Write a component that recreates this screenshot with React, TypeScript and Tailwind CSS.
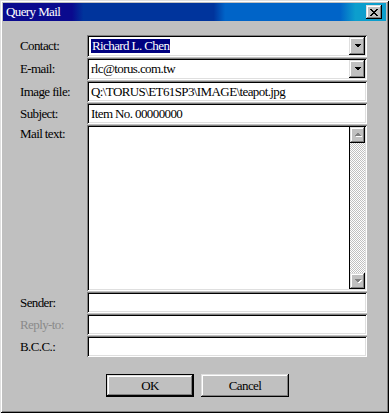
import React from 'react'

const font = { fontFamily: '"Liberation Serif", "Times New Roman", serif' }

const sunken =
  'bg-white shadow-[inset_1px_1px_0_#808080,inset_-1px_-1px_0_#ffffff,inset_2px_2px_0_#000000,inset_-2px_-2px_0_#dfdfdf]'
const raised =
  'bg-[#c0c0c0] shadow-[inset_-1px_-1px_0_#000000,inset_1px_1px_0_#dfdfdf,inset_-2px_-2px_0_#808080,inset_2px_2px_0_#ffffff]'

function DownArrow({ disabled }: { disabled?: boolean }) {
  return (
    <svg width="9" height="6" viewBox="0 0 9 6" shapeRendering="crispEdges">
      {disabled && <path d="M2 2h7L5.5 5.5z" fill="#ffffff" />}
      <path d="M1 1h7L4.5 4.5z" fill={disabled ? '#808080' : '#000000'} />
    </svg>
  )
}

function UpArrow({ disabled }: { disabled?: boolean }) {
  return (
    <svg width="9" height="6" viewBox="0 0 9 6" shapeRendering="crispEdges">
      {disabled && <path d="M2 5h7L5.5 1.5z" fill="#ffffff" />}
      <path d="M1 4h7L4.5 0.5z" fill={disabled ? '#808080' : '#000000'} />
    </svg>
  )
}

function Label({ text, muted, top }: { text: string; muted?: boolean; top?: boolean }) {
  return (
    <div
      className={`flex ${top ? 'items-start pt-[2px]' : 'items-center'} text-[13px] leading-[14px] tracking-[-0.6px] ${
        muted ? 'text-[#8a8a8a]' : 'text-black'
      }`}
    >
      {text}
    </div>
  )
}

function Combo({ value, selected }: { value: string; selected?: boolean }) {
  return (
    <div className={`${sunken} h-[22px] flex items-stretch p-[2px]`}>
      <div className="flex-1 flex items-center pl-[2px] text-[13px] leading-[14px] tracking-[-0.6px]">
        <span className={selected ? 'bg-[#000080] text-white px-[1px]' : 'text-black'}>{value}</span>
      </div>
      <div className={`${raised} w-[16px] flex items-center justify-center`}>
        <DownArrow />
      </div>
    </div>
  )
}

function Field({ value, h = 'h-[21px]' }: { value?: string; h?: string }) {
  return (
    <div
      className={`${sunken} ${h} flex items-center pl-[4px] text-[13px] leading-[14px] tracking-[-0.6px] text-black whitespace-nowrap overflow-hidden`}
    >
      {value}
    </div>
  )
}

function MailText() {
  return (
    <div className={`${sunken} h-[166px] flex justify-end p-[2px]`}>
      <div className="w-[16px] flex flex-col border-l border-black">
        <div className={`${raised} h-[16px] flex items-center justify-center`}>
          <UpArrow disabled />
        </div>
        <div className="flex-1 bg-[repeating-conic-gradient(#c0c0c0_0%_25%,#ffffff_0%_50%)] bg-[length:2px_2px]" />
        <div className={`${raised} h-[16px] flex items-center justify-center`}>
          <DownArrow disabled />
        </div>
      </div>
    </div>
  )
}

export default function App() {
  return (
    <div
      style={font}
      className="w-[389px] h-[413px] bg-[#c0c0c0] p-[3px] flex flex-col shadow-[inset_1px_1px_0_#dfdfdf,inset_-1px_-1px_0_#000000,inset_2px_2px_0_#ffffff,inset_-2px_-2px_0_#808080]"
    >
      {/* title bar */}
      <div className="h-[18px] flex items-center justify-between pl-[3px] pr-[4px] bg-[linear-gradient(to_right,#0a0a8e_0%,#0a0a8e_18%,#00349c_21%,#00349c_55%,#0064c8_58%,#0064c8_88%,#0c9ecd_92%,#0c9ecd_100%)]">
        <span className="text-white text-[13px] leading-[14px] tracking-[-0.6px]">Query Mail</span>
        <div className={`${raised} w-[16px] h-[14px] flex items-center justify-center`}>
          <svg width="8" height="7" viewBox="0 0 8 7" shapeRendering="crispEdges">
            <path d="M0 0h2v1h1v1h2V1h1V0h2v1H7v1H6v1H5v1h1v1h1v1h1v1H6V6H5V5H3v1H2v1H0V6h1V5h1V4h1V3H2V2H1V1H0z" fill="#000" />
          </svg>
        </div>
      </div>

      {/* form */}
      <div className="mt-[14px] pl-[17px] grid grid-cols-[67px_280px] gap-y-[1px]">
        <Label text="Contact:" />
        <Combo value="Richard L. Chen" selected />
        <Label text="E-mail:" />
        <Combo value="rlc@torus.com.tw" />
        <Label text="Image file:" />
        <Field value="Q:\TORUS\ET61SP3\IMAGE\teapot.jpg" />
        <Label text="Subject:" />
        <Field value="Item No. 00000000" />
        <Label text="Mail text:" top />
        <MailText />
        <Label text="Sender:" />
        <Field />
        <Label text="Reply-to:" muted />
        <Field />
        <Label text="B.C.C.:" />
        <Field />
      </div>

      {/* buttons */}
      <div className="mt-[17px] pl-[103px] flex gap-[7px]">
        <div className="w-[88px] h-[23px] border border-black">
          <div className={`${raised} w-full h-full flex items-center justify-center text-[13px] leading-[14px] tracking-[-0.6px] text-black`}>
            OK
          </div>
        </div>
        <div className={`${raised} w-[88px] h-[23px] flex items-center justify-center text-[13px] leading-[14px] tracking-[-0.6px] text-black`}>
          Cancel
        </div>
      </div>
    </div>
  )
}
